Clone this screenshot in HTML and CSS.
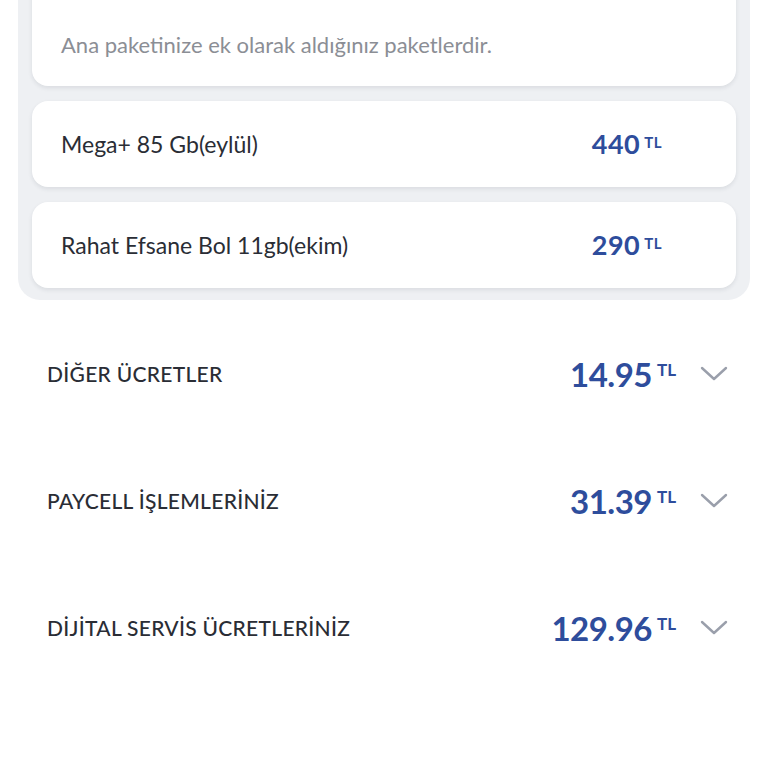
FILE: index.html
```html
<!DOCTYPE html>
<html lang="tr">
<head>
<meta charset="utf-8">
<link rel="stylesheet" href="styles.css">
</head>
<body>
<div class="group">
  <div class="card card-intro">
    <div class="intro-title">Ek paketleriniz (yurt içi kullanım) <span class="intro-sub">Tüm paketler</span></div>
    <div class="intro-desc">Ana paketinize ek olarak aldığınız paketlerdir.</div>
  </div>
  <div class="card">
    <span class="item-name">Mega+ 85 Gb(eylül)</span>
    <span class="price"><span class="num">440</span><span class="cur">TL</span></span>
  </div>
  <div class="card">
    <span class="item-name">Rahat Efsane Bol 11gb(ekim)</span>
    <span class="price"><span class="num">290</span><span class="cur">TL</span></span>
  </div>
</div>

<div class="rows">
  <div class="row">
    <span class="row-title">DİĞER ÜCRETLER</span>
    <span class="row-right">
      <span class="amount"><span class="big">14.95</span><span class="tl">TL</span></span>
      <svg class="chev" width="28" height="16" viewBox="0 0 28 16"><path d="M2 2 L14 13 L26 2" fill="none" stroke="#9a9fab" stroke-width="2.4" stroke-linecap="round" stroke-linejoin="round"/></svg>
    </span>
  </div>
  <div class="row">
    <span class="row-title">PAYCELL İŞLEMLERİNİZ</span>
    <span class="row-right">
      <span class="amount"><span class="big">31.39</span><span class="tl">TL</span></span>
      <svg class="chev" width="28" height="16" viewBox="0 0 28 16"><path d="M2 2 L14 13 L26 2" fill="none" stroke="#9a9fab" stroke-width="2.4" stroke-linecap="round" stroke-linejoin="round"/></svg>
    </span>
  </div>
  <div class="row">
    <span class="row-title">DİJİTAL SERVİS ÜCRETLERİNİZ</span>
    <span class="row-right">
      <span class="amount"><span class="big">129.96</span><span class="tl">TL</span></span>
      <svg class="chev" width="28" height="16" viewBox="0 0 28 16"><path d="M2 2 L14 13 L26 2" fill="none" stroke="#9a9fab" stroke-width="2.4" stroke-linecap="round" stroke-linejoin="round"/></svg>
    </span>
  </div>
</div>
</body>
</html>
```

FILE: styles.css
```css
html, body {
  margin: 0;
  padding: 0;
  background: #ffffff;
  font-family: Lato, "Noto Sans", "Liberation Sans", sans-serif;
  color: #2a2d35;
  overflow: hidden;
}

.group {
  margin: -39px 18px 0 18px;
  padding: 14px 14px 12px 14px;
  background: #eef0f3;
  border-radius: 0 0 22px 22px;
  display: flex;
  flex-direction: column;
  gap: 15px;
}

.card {
  background: #ffffff;
  border-radius: 16px;
  box-shadow: 0 2px 4px rgba(40, 50, 70, 0.10);
  height: 86px;
  box-sizing: border-box;
  padding: 0 74px 0 29px;
  display: flex;
  align-items: center;
  justify-content: space-between;
}

.card-intro {
  height: auto;
  display: block;
  padding: 0 29px 29px 29px;
}

.intro-title {
  font-size: 21px;
  line-height: 24px;
  margin-bottom: 34px;
  color: #2a2d35;
  white-space: nowrap;
}

.intro-sub {
  margin-left: 40px;
  color: #9aa0aa;
}

.intro-desc {
  font-size: 22px;
  line-height: 24px;
  color: #8b8e95;
}

.item-name {
  font-size: 23px;
  color: #2a2d35;
}

.price {
  display: flex;
  align-items: flex-start;
  color: #2e4d9c;
}

.price .num {
  font-size: 27px;
  font-weight: 700;
  line-height: 28px;
  letter-spacing: 0.5px;
}

.price .cur {
  font-size: 15px;
  font-weight: 700;
  margin-left: 4px;
  line-height: 18px;
  margin-top: 3px;
  letter-spacing: 0.5px;
}

.rows {
  display: flex;
  flex-direction: column;
  padding-top: 10px;
}

.row {
  height: 127px;
  box-sizing: border-box;
  padding: 0 40px 0 47px;
  display: flex;
  align-items: center;
  justify-content: space-between;
}

.row-title {
  font-size: 21px;
  font-weight: 500;
  letter-spacing: 0.3px;
  color: #2a2d35;
}

.row-right {
  display: flex;
  align-items: center;
  gap: 24px;
}

.amount {
  display: flex;
  align-items: flex-start;
  color: #2e4d9c;
}

.amount .big {
  font-size: 33px;
  font-weight: 700;
  line-height: 34px;
  letter-spacing: -0.5px;
}

.amount .tl {
  font-size: 17px;
  font-weight: 700;
  margin-left: 5px;
  line-height: 18px;
  margin-top: 4px;
}

.chev {
  display: block;
}
```
